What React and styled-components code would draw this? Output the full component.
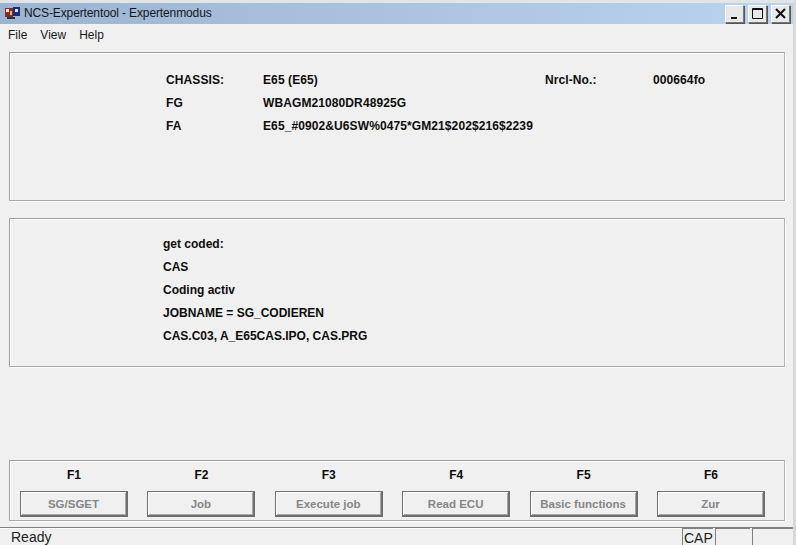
import React from "react";
import styled, { createGlobalStyle } from "styled-components";

const GlobalStyle = createGlobalStyle`
  html, body {
    margin: 0;
    padding: 0;
    background: #f0f0f0;
  }
`;

const Window = styled.div`
  width: 796px;
  height: 545px;
  box-sizing: border-box;
  display: flex;
  flex-direction: column;
  background: #f0f0f0;
  overflow: hidden;
  font-family: "Liberation Sans", Arial, sans-serif;
  color: #0c0c0c;
  border-top: 3px solid #e4e4e4;
  border-right: 3px solid #d8d8d8;
`;

const TitleBar = styled.div`
  height: 21px;
  flex: none;
  display: flex;
  align-items: center;
  padding: 0 3px 0 5px;
  gap: 3px;
  background: linear-gradient(to right, #9db4d0 0%, #abc3df 50%, #bad3ee 100%);
  font-size: 12px;
  letter-spacing: -0.12px;
  color: #10161e;
`;

const TitleText = styled.span`
  flex: 1;
  line-height: 21px;
`;

const WinButton = styled.div`
  width: 17px;
  height: 16px;
  margin-left: 1px;
  display: flex;
  align-items: center;
  justify-content: center;
  background: #e6e8ea;
  border: 1px solid;
  border-color: #fff #777 #777 #fff;
  box-shadow: 1px 1px 0 #555;
`;

const Menu = styled.div`
  height: 22px;
  flex: none;
  display: flex;
  align-items: center;
  gap: 13px;
  padding-left: 8px;
  font-size: 12px;
  color: #1a1a1a;
`;

const Content = styled.div`
  flex: 1;
  display: flex;
  flex-direction: column;
  padding: 6px 8px 0 9px;
`;

const Frame = styled.div`
  height: ${(p) => p.$h}px;
  margin-bottom: ${(p) => p.$mb}px;
  flex: none;
  box-sizing: border-box;
  border: 1px solid #a0a0a0;
  border-right-color: #b4b4b4;
  border-bottom-color: #a8a8a8;
  box-shadow: inset 1px 1px 0 #fff, 1px 1px 0 #fff;
`;

const InfoGrid = styled.div`
  display: grid;
  grid-template-columns: 97px 282px 108px auto;
  grid-auto-rows: 23px;
  padding: 16px 0 0 156px;
  font-size: 12px;
  font-weight: 700;
  line-height: 23px;
  letter-spacing: 0.1px;
`;

const Clip = styled.span`
  max-width: 271px;
  white-space: nowrap;
  overflow: hidden;
`;

const LogList = styled.div`
  display: flex;
  flex-direction: column;
  padding: 14px 0 0 153px;
  font-size: 12px;
  font-weight: 700;
  line-height: 23px;
`;

const KeyBar = styled.div`
  display: flex;
  gap: 19.4px;
  padding: 5px 0 0 10px;
`;

const KeyCol = styled.div`
  width: 108px;
  display: flex;
  flex-direction: column;
  align-items: center;
  gap: 6px;
`;

const KeyLabel = styled.div`
  font-size: 12px;
  font-weight: 700;
  line-height: 19px;
  height: 19px;
`;

const FnButton = styled.div`
  width: 108px;
  height: 26px;
  box-sizing: border-box;
  display: flex;
  align-items: center;
  justify-content: center;
  background: #f0f0f0;
  border: 1px solid #6e6e6e;
  border-right: 2px solid #6e6e6e;
  border-bottom: 2px solid #6e6e6e;
  box-shadow: inset 1px 1px 0 #fff, inset -1px -1px 0 #a8a8a8;
  color: #858585;
  font-size: 11.5px;
  font-weight: 700;
`;

const StatusBar = styled.div`
  height: 18px;
  flex: none;
  display: flex;
  border-top: 1px solid #808080;
  box-shadow: inset 0 1px 0 #fff;
  font-size: 14px;
  line-height: 18px;
  color: #222;
`;

const StatusText = styled.div`
  flex: 1;
  padding-left: 11px;
`;

const StatusCell = styled.div`
  width: ${(p) => p.$w}px;
  box-sizing: border-box;
  margin-left: 2px;
  padding-left: 1px;
  border-left: 1px solid #808080;
  border-top: 1px solid #808080;
  white-space: nowrap;
`;

const keys = [
  ["F1", "SG/SGET"],
  ["F2", "Job"],
  ["F3", "Execute job"],
  ["F4", "Read ECU"],
  ["F5", "Basic functions"],
  ["F6", "Zur"],
];

const logLines = [
  "get coded:",
  "CAS",
  "Coding activ",
  "JOBNAME = SG_CODIEREN",
  "CAS.C03, A_E65CAS.IPO, CAS.PRG",
];

const AppIcon = () => (
  <svg width="16" height="14" viewBox="0 0 16 14">
    <rect x="0" y="1" width="8" height="9" fill="#8a2a2a" />
    <rect x="1" y="2" width="3" height="3" fill="#e8e8e8" />
    <rect x="5" y="4" width="2" height="4" fill="#d8c040" />
    <rect x="8" y="0" width="7" height="9" fill="#1c2a80" />
    <rect x="10" y="2" width="3" height="3" fill="#e0e0f0" />
    <rect x="2" y="10" width="8" height="2" fill="#303030" />
  </svg>
);

export default function App() {
  return (
    <Window>
      <GlobalStyle />
      <TitleBar>
        <AppIcon />
        <TitleText>NCS-Expertentool - Expertenmodus</TitleText>
        <WinButton>
          <svg width="12" height="12" viewBox="0 0 12 12">
            <rect x="2" y="9" width="6" height="2" fill="#111" />
          </svg>
        </WinButton>
        <WinButton>
          <svg width="12" height="12" viewBox="0 0 12 12">
            <path d="M0.5 0.5h10v10h-10z M0.5 1.5h10" fill="none" stroke="#111" />
          </svg>
        </WinButton>
        <WinButton>
          <svg width="12" height="12" viewBox="0 0 12 12">
            <path d="M1 1l9 9M10 1l-9 9" fill="none" stroke="#111" strokeWidth="2" />
          </svg>
        </WinButton>
      </TitleBar>
      <Menu>
        <span>File</span>
        <span>View</span>
        <span>Help</span>
      </Menu>
      <Content>
        <Frame $h={149} $mb={17}>
          <InfoGrid>
            <span>CHASSIS:</span>
            <span>E65 (E65)</span>
            <span>Nrcl-No.:</span>
            <span>000664fo</span>
            <span>FG</span>
            <span>WBAGM21080DR48925G</span>
            <span />
            <span />
            <span>FA</span>
            <Clip>E65_#0902&amp;U6SW%0475*GM21$202$216$2239</Clip>
          </InfoGrid>
        </Frame>
        <Frame $h={149} $mb={93}>
          <LogList>
            {logLines.map((line) => (
              <div key={line}>{line}</div>
            ))}
          </LogList>
        </Frame>
        <Frame $h={61} $mb={6}>
          <KeyBar>
            {keys.map(([key, label]) => (
              <KeyCol key={key}>
                <KeyLabel>{key}</KeyLabel>
                <FnButton>{label}</FnButton>
              </KeyCol>
            ))}
          </KeyBar>
        </Frame>
      </Content>
      <StatusBar>
        <StatusText>Ready</StatusText>
        <StatusCell $w={31}>CAP</StatusCell>
        <StatusCell $w={35} />
        <StatusCell $w={41} />
      </StatusBar>
    </Window>
  );
}
